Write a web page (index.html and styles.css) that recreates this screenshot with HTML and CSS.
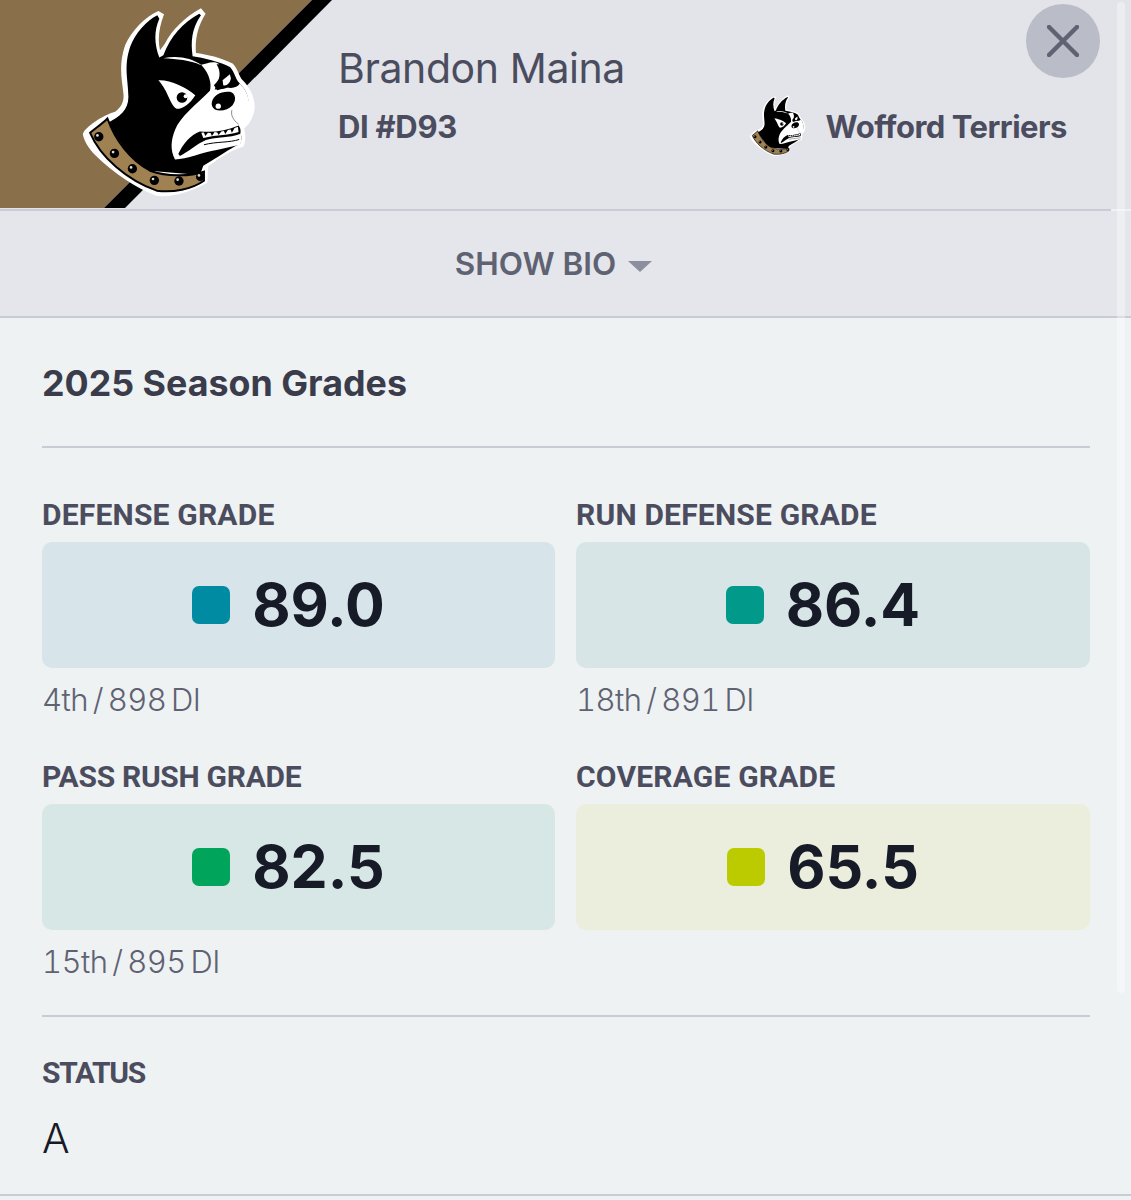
FILE: index.html
```html
<!DOCTYPE html>
<html lang="en">
<head>
<meta charset="utf-8">
<title>Brandon Maina</title>
<link rel="stylesheet" href="styles.css">
</head>
<body>
<svg class="defs" width="0" height="0" aria-hidden="true">
  <symbol id="dog" viewBox="240 20 540 580">
    <path fill="#fff" d="M475,32 L492,42 C478,80 472,115 480,150 L495,130 C515,90 555,50 603,24 L617,40 C592,80 585,120 588,158 C620,162 665,172 698,190 C715,205 715,228 730,242 C752,265 770,300 763,335 C755,362 745,375 733,385 C738,405 738,425 730,440 C695,450 665,470 625,498 L622,548 C580,570 530,592 470,588 C410,565 340,520 285,465 C265,445 250,420 248,402 C255,380 310,345 345,335 C368,318 372,300 370,280 C365,235 355,195 375,135 C395,90 435,50 475,32Z"/>
    <path fill="#000" d="M472,45 L478,55 C462,90 462,130 478,172 L490,165 C510,110 550,65 598,40 L603,45 C575,85 572,125 578,168 C610,172 660,185 690,200 C705,215 705,235 720,250 C740,270 752,300 745,335 C735,365 725,375 715,380 C725,400 728,420 720,432 C690,445 650,475 610,497 L600,525 L420,510 L320,370 C360,350 385,330 385,290 C385,240 370,200 390,140 C405,100 440,60 472,45Z"/>
    <path fill="#fff" d="M490,174 C530,165 575,172 605,195 C628,220 636,250 630,272 C590,312 540,350 525,390 C513,420 510,450 525,478 C560,478 610,456 650,450 L720,434 C728,420 725,400 715,380 C735,375 745,355 748,330 C752,300 740,270 720,250 C712,262 700,265 680,262 L652,270 L642,255 C665,235 668,205 655,190 C640,180 615,192 602,194 C570,180 530,176 490,174Z"/>
    <path fill="#000" d="M650,192 C675,190 690,205 694,225 C700,245 690,262 670,266 L644,268 C660,240 665,215 650,192Z"/>
    <path fill="#fff" d="M668,240 L690,222 L693,235 C690,250 680,258 670,255Z"/>
    <path fill="#000" d="M636,305 C640,285 665,272 690,275 C708,280 710,300 698,315 C685,330 660,335 645,328 C636,322 634,315 636,305Z"/>
    <circle cx="655" cy="318" r="8" fill="#fff"/>
    <path fill="none" stroke="#8a8a8a" stroke-width="3" d="M696,330 C692,345 700,360 716,372"/>
    <path fill="#000" d="M535,462 C548,432 572,404 600,394 C640,398 680,392 716,376 C722,384 724,392 720,402 C690,414 650,410 618,420 C590,432 565,456 540,468Z"/>
    <path fill="#fff" d="M604,398 L612,397 L616,408 L624,398 L632,399 L636,408 L644,396 L652,397 L656,405 L664,394 L672,393 L676,402 L684,390 L692,388 L696,398 L704,384 L714,380 L716,396 C690,406 650,404 610,414Z"/>
    <path fill="none" stroke="#000" stroke-width="3" d="M612,434 C650,424 690,428 718,418"/>
    <path fill="#fff" d="M475,240 C510,238 560,262 586,285 C570,310 550,326 530,326 C510,315 505,272 475,240Z"/>
    <circle cx="546" cy="292" r="16" fill="#000"/>
    <circle cx="557" cy="288" r="6" fill="#fff"/>
    <path fill="#a08152" stroke="#000" stroke-width="6" d="M270,398 C285,385 305,372 322,355 C345,420 390,480 450,512 C500,530 570,530 612,515 L612,542 C575,568 520,578 470,572 C380,540 300,470 270,398Z"/>
    <circle cx="296" cy="410" r="14" fill="#000"/><circle cx="343" cy="460" r="14" fill="#000"/>
    <circle cx="397" cy="506" r="14" fill="#000"/><circle cx="463" cy="541" r="14" fill="#000"/>
    <circle cx="537" cy="543" r="14" fill="#000"/><circle cx="601" cy="530" r="13" fill="#000"/>
    <circle cx="292" cy="406" r="4" fill="#ddd"/><circle cx="339" cy="456" r="4" fill="#ddd"/>
    <circle cx="393" cy="502" r="4" fill="#ddd"/><circle cx="459" cy="537" r="4" fill="#ddd"/>
    <circle cx="533" cy="539" r="4" fill="#ddd"/><circle cx="597" cy="526" r="4" fill="#ddd"/>
  </symbol>
</svg>

<div class="panel">
  <header class="hero">
    <svg class="hero-art" viewBox="0 0 332 208" aria-hidden="true">
      <polygon class="art-gold" points="0,0 312,0 104,208 0,208"/>
      <polygon class="art-black" points="312,0 332,0 125,208 104,208"/>
      <use href="#dog" x="80" y="7" width="180" height="193"/>
    </svg>
    <div class="identity">
      <h1 class="name">Brandon Maina</h1>
      <div class="meta-row">
        <span class="jersey">DI #D93</span>
        <span class="team">
          <svg class="team-logo" aria-hidden="true"><use href="#dog"/></svg>
          <span>Wofford Terriers</span>
        </span>
      </div>
    </div>
    <button class="close" aria-label="Close">
      <svg viewBox="0 0 32 32" width="32" height="32"><path d="M2 2 L30 30 M30 2 L2 30"/></svg>
    </button>
  </header>
  <div class="hero-rule"></div>

  <div class="bio">
    <span>SHOW BIO</span>
    <span class="caret"></span>
  </div>

  <main class="content">
    <h2 class="title">2025 Season Grades</h2>
    <hr class="rule rule-top">
    <section class="grades">
      <div class="grade">
        <div class="label">DEFENSE GRADE</div>
        <div class="card card-blue"><span class="chip chip-blue"></span><span class="value">89.0</span></div>
        <div class="rank">4th / 898 DI</div>
      </div>
      <div class="grade">
        <div class="label">RUN DEFENSE GRADE</div>
        <div class="card card-teal"><span class="chip chip-teal"></span><span class="value">86.4</span></div>
        <div class="rank">18th / 891 DI</div>
      </div>
      <div class="grade">
        <div class="label label-tight">PASS RUSH GRADE</div>
        <div class="card card-green"><span class="chip chip-green"></span><span class="value">82.5</span></div>
        <div class="rank">15th / 895 DI</div>
      </div>
      <div class="grade">
        <div class="label">COVERAGE GRADE</div>
        <div class="card card-lime"><span class="chip chip-lime"></span><span class="value">65.5</span></div>
      </div>
    </section>
    <hr class="rule rule-mid">
    <div class="label label-status">STATUS</div>
    <div class="status">A</div>
  </main>
  <div class="bottom-rule"></div>
  <div class="scrollbar"></div>
</div>
</body>
</html>
```

FILE: styles.css
```css
* { box-sizing: border-box; }
html, body { margin: 0; padding: 0; }
body { background: #eef2f3; font-family: Inter, "Liberation Sans", sans-serif; color: #4b4d5e; overflow: hidden; }
.defs { position: absolute; }
.panel { position: relative; width: 1131px; height: 1200px; overflow: hidden; }

.hero { position: relative; display: flex; height: 209px; background: #e2e4ea; }
.hero-art { display: block; width: 332px; height: 208px; flex: none; }
.art-gold { fill: #8a6f4b; }
.art-black { fill: #000; }
.identity { flex: 1; padding: 42px 64px 0 6px; }
.name { margin: 0; font-size: 41px; line-height: 52px; font-weight: 400; color: #4b4d5e; letter-spacing: -0.4px; }
.meta-row { display: flex; justify-content: space-between; align-items: center; height: 64px; }
.jersey { font-size: 31px; font-weight: 700; letter-spacing: -0.3px; }
.team { display: flex; align-items: center; gap: 19px; font-size: 31px; font-weight: 700; letter-spacing: -0.5px; }
.team-logo { width: 58px; height: 64px; display: block; }
.close { position: absolute; top: 4px; left: 1026px; width: 74px; height: 74px; border: 0; border-radius: 50%; background: #babdc7; padding: 0; display: flex; align-items: center; justify-content: center; }
.close path { fill: none; stroke: #5f6272; stroke-width: 4.5; stroke-linecap: round; }
.hero-rule { height: 2px; margin-right: 20px; background: #c9cbd6; }

.bio { height: 107px; background: #e4e6eb; border-bottom: 2px solid #c9cbd6; display: flex; align-items: center; justify-content: center; gap: 12px; padding-right: 24px; font-size: 31.5px; font-weight: 600; color: #5f6272; }
.caret { width: 0; height: 0; border-left: 12px solid transparent; border-right: 12px solid transparent; border-top: 11px solid #8b8e9d; margin-top: 6px; }

.content { padding: 44px 41px 0 42px; }
.title { margin: 0; font-size: 35.8px; line-height: 42px; font-weight: 700; color: #3a3c4b; }
.rule { height: 2px; margin: 0; border: 0; background: #c9cbd6; }
.rule-top { margin-top: 42px; }
.grades { display: grid; grid-template-columns: 513px 514px; column-gap: 21px; grid-template-rows: 262px 258px; padding-top: 48px; }
.rule-mid { margin-top: -1px; }
.label { font-family: Roboto, "Liberation Sans", sans-serif; font-weight: 700; font-size: 30px; line-height: 38px; letter-spacing: .2px; color: #4b4d5e; }
.label-tight { letter-spacing: -.3px; }
.label-status { letter-spacing: -1.3px; }
.card { height: 126px; margin-top: 8px; padding-right: 20px; border-radius: 10px; display: flex; align-items: center; justify-content: center; gap: 22px; }
.card-blue { background: #d7e4e9; }
.card-teal { background: #d7e5e7; }
.card-green { background: #d7e7e5; }
.card-lime { background: #ebeedd; }
.chip { width: 38px; height: 38px; border-radius: 7px; }
.chip-blue { background: #008ba3; }
.chip-teal { background: #00998a; }
.chip-green { background: #00a45a; }
.chip-lime { background: #bccb00; }
.value { font-size: 59px; line-height: 72px; font-weight: 700; color: #171a27; }
.rank { margin-top: 12px; font-size: 31px; line-height: 40px; font-weight: 300; color: #5f6272; word-spacing: -3px; letter-spacing: -.55px; font-variant-numeric: tabular-nums; }
.rule-mid + .label { margin-top: 37px; }
.status { margin-top: 21px; font-size: 41px; line-height: 50px; font-weight: 300; color: #171a27; }
.bottom-rule { position: absolute; left: 0; right: 0; top: 1194px; height: 2px; background: #c9cbd6; }
.scrollbar { position: absolute; top: 2px; left: 1117px; width: 8px; height: 991px; border-radius: 4px; background: rgba(255,255,255,.35); }
```
